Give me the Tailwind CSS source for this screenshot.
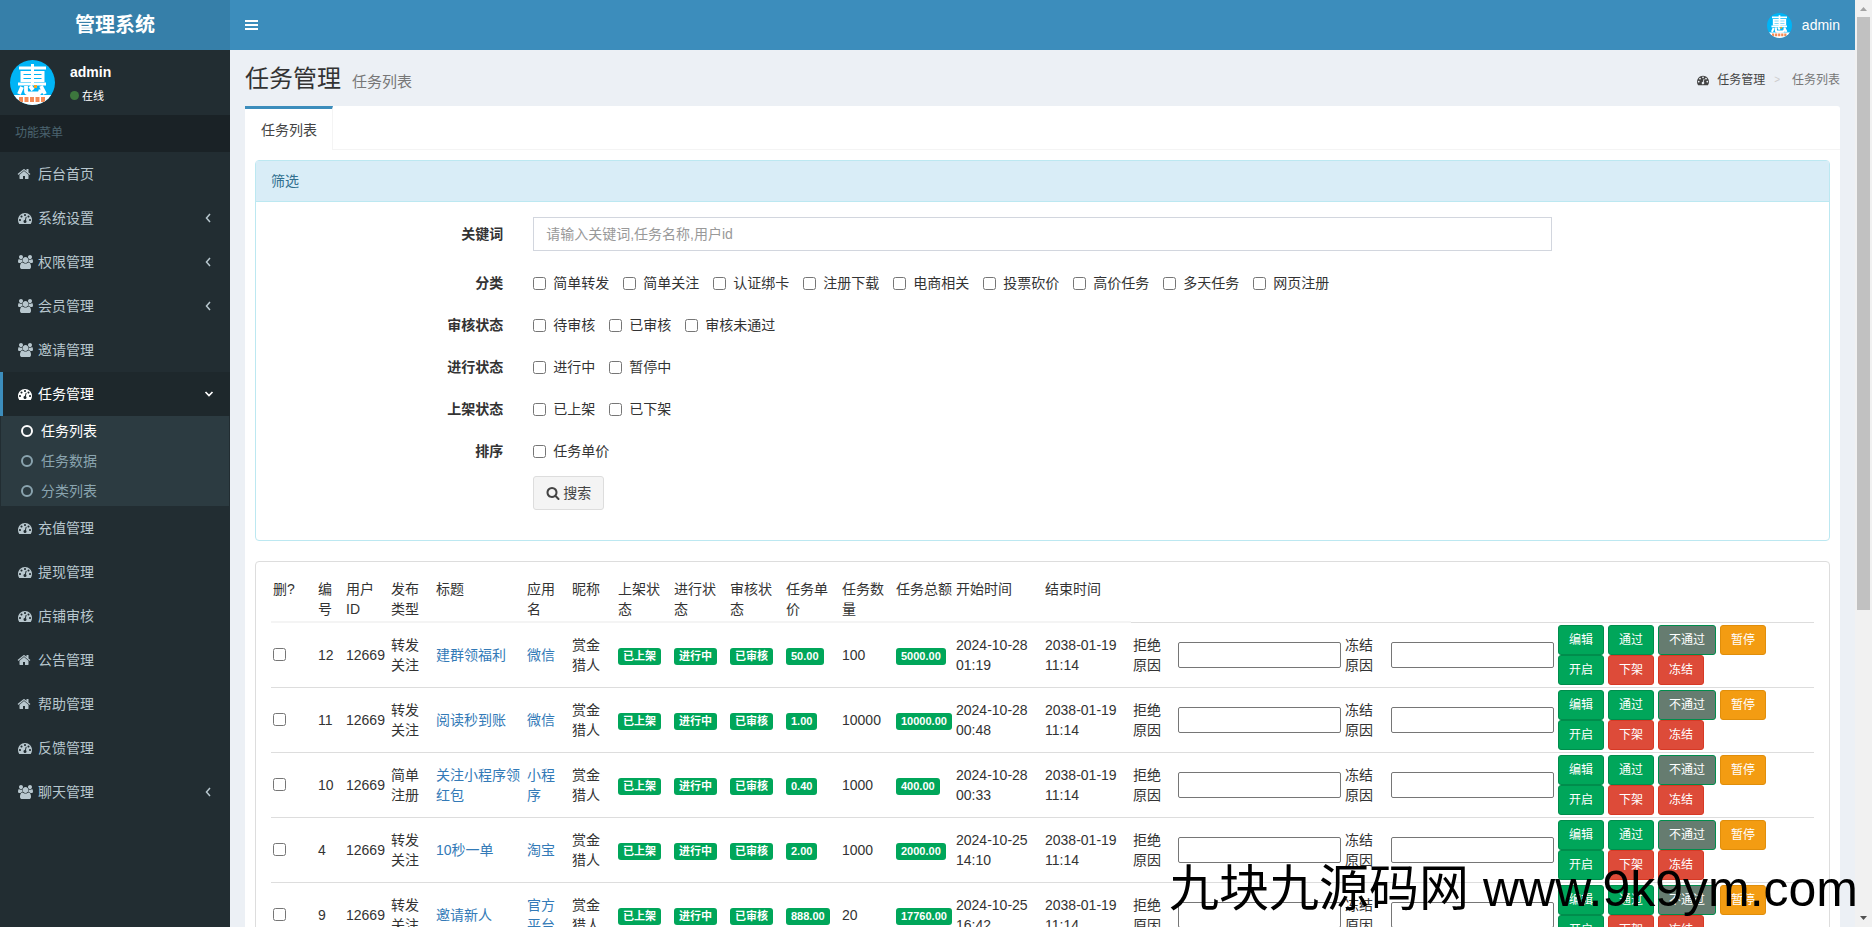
<!DOCTYPE html>
<html lang="zh-CN">
<head>
<meta charset="utf-8">
<title>管理系统 - 任务列表</title>
<script src="https://cdn.jsdelivr.net/npm/@tailwindcss/browser@4"></script>
</head>
<body class="relative flex h-screen overflow-hidden bg-[#ecf0f5] text-sm leading-5 text-[#333] font-['Liberation_Sans','Noto_Sans_CJK_SC',sans-serif]">
<svg class="hidden" aria-hidden="true">
  <symbol id="home" viewBox="0 0 1792 1792"><path d="M1472 992v480q0 26-19 45t-45 19h-384v-384h-256v384h-384q-26 0-45-19t-19-45v-480q0-1 .5-3t.5-3l575-474 575 474q1 2 1 6zm223-69l-62 74q-8 9-21 11h-3q-13 0-21-7l-692-577-692 577q-12 8-24 7-13-2-21-11l-62-74q-8-10-7-23.500t11-21.500l719-599q32-26 76-26t76 26l244 204v-195q0-14 9-23t23-9h192q14 0 23 9t9 23v408l219 182q10 8 11 21.500t-7 23.500z"/></symbol>
  <symbol id="dash" viewBox="0 0 1792 1792"><path d="M384 1152q0-53-37.500-90.500t-90.500-37.500-90.500 37.500-37.500 90.500 37.500 90.500 90.500 37.500 90.500-37.500 37.500-90.500zm192-448q0-53-37.500-90.500t-90.500-37.500-90.500 37.500-37.500 90.500 37.500 90.500 90.500 37.500 90.500-37.500 37.500-90.500zm428 481l101-382q6-26-7.500-48.500t-38.500-29.500-48 6.500-30 39.500l-101 382q-60 5-107 43.500t-63 98.500q-20 77 20 146t117 89 146-20 89-117q16-60-6-117t-72-91zm660-33q0-53-37.500-90.500t-90.500-37.500-90.500 37.500-37.500 90.500 37.500 90.500 90.500 37.500 90.500-37.500 37.500-90.500zm-640-640q0-53-37.500-90.500t-90.500-37.500-90.500 37.500-37.500 90.500 37.500 90.500 90.500 37.500 90.500-37.500 37.500-90.500zm448 192q0-53-37.500-90.500t-90.500-37.500-90.500 37.500-37.500 90.500 37.500 90.500 90.500 37.500 90.500-37.500 37.500-90.500zm320 448q0 261-141 483-19 29-54 29h-1402q-35 0-54-29-141-221-141-483 0-182 71-348t191-286 286-191 348-71 348 71 286 191 191 286 71 348z"/></symbol>
  <symbol id="users" viewBox="0 0 1920 1792"><path d="M593 896q-162 5-265 128h-134q-82 0-138-40.500t-56-118.500q0-353 124-353 6 0 43.500 21t97.500 42.500 119 21.500q67 0 133-23-5 37-5 66 0 139 81 256zm1071 637q0 120-73 189.500t-194 69.500h-874q-121 0-194-69.500t-73-189.500q0-53 3.500-103.500t14-109 26.500-108.500 43-97.500 62-81 85.500-53.500 111.500-20q10 0 43 21.500t73 48 107 48 135 21.500 135-21.500 107-48 73-48 43-21.500q61 0 111.500 20t85.500 53.500 62 81 43 97.500 26.500 108.500 14 109 3.500 103.500zm-1024-1277q0 106-75 181t-181 75-181-75-75-181 75-181 181-75 181 75 75 181zm704 384q0 159-112.500 271.500t-271.500 112.500-271.500-112.500-112.500-271.500 112.500-271.500 271.500-112.500 271.500 112.500 112.500 271.500zm576 225q0 78-56 118.500t-138 40.500h-134q-103-123-265-128 81-117 81-256 0-29-5-66 66 23 133 23 59 0 119-21.500t97.500-42.500 43.500-21q124 0 124 353zm-128-609q0 106-75 181t-181 75-181-75-75-181 75-181 181-75 181 75 75 181z"/></symbol>
  <symbol id="search" viewBox="0 0 1792 1792"><path d="M1216 832q0-185-131.500-316.500t-316.500-131.500-316.500 131.500-131.500 316.500 131.500 316.500 316.500 131.500 316.500-131.500 131.500-316.500zm512 832q0 52-38 90t-90 38q-54 0-90-38l-343-342q-179 124-399 124-143 0-273.500-55.500t-225-150-150-225-55.500-273.500 55.500-273.500 150-225 225-150 273.500-55.500 273.500 55.500 225 150 150 225 55.500 273.500q0 220-124 399l343 343q37 37 37 90z"/></symbol>
  <symbol id="ring" viewBox="0 0 14 14"><circle cx="7" cy="7" r="5" fill="none" stroke="currentColor" stroke-width="2"/></symbol>
  <symbol id="left" viewBox="0 0 8 14"><path d="M6 3 2.500 7 6 11" fill="none" stroke="currentColor" stroke-width="1.500"/></symbol>
  <symbol id="down" viewBox="0 0 10 14"><path d="M1.500 5 5 8.500 8.500 5" fill="none" stroke="currentColor" stroke-width="1.700"/></symbol>
  <symbol id="avatar" viewBox="0 0 45 45">
    <rect width="45" height="45" fill="#00b4f6"/>
    <rect y="35" width="45" height="10" fill="#fff"/>
    <g fill="none" stroke="#fff" stroke-width="3">
      <path d="M9 8h27M22.500 4v19M12 12.500h21v8H12zM12 16.500h21M8 24h28"/>
      <path d="M12 27l-3 7M16 26v5q0 2.500 3 2.500h9q2.500 0 2.500-4M20 26l3 4M31 26l4 8" stroke-width="3.800"/>
    </g>
    <rect x="24" y="25" width="3" height="3" fill="#f5a623"/>
    <path d="M9 37h4v5H9zM14.500 37h4v5h-4zM20 37h4v5h-4zM25.500 37h4v5h-4zM31 37h4v5h-4z" fill="#f58a55"/>
  </symbol>
</svg>

<aside class="flex w-[230px] shrink-0 flex-col bg-[#222d32]">
  <a href="#" class="flex h-[50px] shrink-0 items-center justify-center bg-[#367fa9] text-xl font-bold text-white">管理系统</a>
  <div class="flex h-[65px] shrink-0 items-center gap-[15px] px-[10px] text-white">
    <svg class="size-[45px] rounded-full"><use href="#avatar"/></svg>
    <div class="flex flex-col gap-1 pt-0.5">
      <p class="font-bold">admin</p>
      <a href="#" class="flex items-center gap-[3px] text-[11px]"><span class="size-[9px] rounded-full bg-[#3c763d]"></span>在线</a>
    </div>
  </div>
  <div class="flex h-[37px] shrink-0 items-center bg-[#1a2226] px-[15px] pb-0.5 text-xs text-[#4b646f]">功能菜单</div>
  <nav id="menu" class="flex flex-col text-[#b8c7ce]"></nav>
</aside>

<div class="flex min-w-0 flex-1 flex-col">
  <header class="flex h-[50px] shrink-0 items-center justify-between bg-[#3c8dbc] px-[15px] text-white">
    <button type="button" aria-label="切换菜单"><svg class="h-[14px] w-[13px]" viewBox="0 0 13 14" fill="currentColor"><path d="M0 2h13v2H0zM0 6h13v2H0zM0 10h13v2H0z"/></svg></button>
    <a href="#" class="flex items-center gap-[10px]"><svg class="size-[25px] rounded-full"><use href="#avatar"/></svg>admin</a>
  </header>
  <main class="flex flex-col overflow-hidden px-[15px]">
    <div class="flex h-[56px] shrink-0 items-center justify-between pt-0.5">
      <h1 class="flex items-baseline gap-[11px] text-2xl">任务管理<small class="text-[15px] text-[#777]">任务列表</small></h1>
      <nav class="flex items-center pt-0.5 text-xs text-[#777]" aria-label="位置">
        <a href="#" class="flex items-center gap-2 text-[#444]"><svg class="size-3 fill-current"><use href="#dash"/></svg>任务管理</a>
        <span class="pr-3 pl-[9px] text-[10px] text-[#ccc]">&gt;</span>
        <span>任务列表</span>
      </nav>
    </div>
    <div class="rounded-[3px] bg-white">
      <div class="flex h-[44px] border-b border-[#f4f4f4]">
        <a href="#" class="-mb-px flex items-center border-t-3 border-r border-t-[#3c8dbc] border-r-[#f4f4f4] bg-white pr-[15px] pl-4 text-[#444]">任务列表</a>
      </div>
      <div class="flex flex-col gap-5 p-[10px]">
        <section class="rounded border border-[#bce8f1] bg-white">
          <h2 class="border-b border-[#bce8f1] bg-[#d9edf7] px-[15px] py-[10px] text-[#31708f]">筛选</h2>
          <form id="filters" class="flex flex-col gap-[15px] pt-[15px] pb-[30px]">
            <div class="grid grid-cols-12">
              <label for="kw" class="col-span-2 px-[15px] pt-[7px] text-right font-bold">关键词</label>
              <div class="col-span-8 px-[15px]"><input id="kw" type="text" placeholder="请输入关键词,任务名称,用户id" class="block h-[34px] w-full border border-[#d2d6de] px-3 placeholder:text-[#999]"></div>
            </div>
          </form>
        </section>
        <section class="rounded border border-[#ddd] bg-white p-[15px]">
          <table class="w-full table-fixed border-separate border-spacing-0 text-left">
            <colgroup>
              <col class="w-[45px]"><col class="w-[28px]"><col class="w-[45px]"><col class="w-[45px]"><col class="w-[91px]"><col class="w-[45px]"><col class="w-[46px]"><col class="w-[56px]"><col class="w-[56px]"><col class="w-[56px]"><col class="w-[56px]"><col class="w-[54px]"><col class="w-[60px]"><col class="w-[89px]"><col class="w-[88px]"><col class="w-[45px]"><col class="w-[167px]"><col class="w-[46px]"><col class="w-[167px]"><col>
            </colgroup>
            <thead><tr id="head"></tr></thead>
            <tbody id="rows"></tbody>
          </table>
        </section>
      </div>
    </div>
  </main>
</div>

<div class="flex w-[17px] shrink-0 flex-col items-center bg-[#f1f1f1]" aria-hidden="true">
  <svg class="size-[17px] shrink-0" viewBox="0 0 17 17"><path d="M5 11h7L8.500 7z" fill="#a3a3a3"/></svg>
  <div class="h-[64%] w-[13px] bg-[#c1c1c1]"></div>
  <svg class="mt-auto size-[17px] shrink-0" viewBox="0 0 17 17"><path d="M5 6h7L8.500 10z" fill="#505050"/></svg>
</div>

<p class="pointer-events-none absolute right-[14px] bottom-2 text-[50px] leading-[60px] whitespace-nowrap text-black">九块九源码网 www.9k9ym.com</p>

<script>
  const icon = (id, cls) => `<svg class="${cls}"><use href="#${id}"/></svg>`;

  const menu = [
    ['home', '后台首页'], ['dash', '系统设置', 1], ['users', '权限管理', 1], ['users', '会员管理', 1], ['users', '邀请管理'],
    ['dash', '任务管理', 2], ['dash', '充值管理'], ['dash', '提现管理'], ['dash', '店铺审核'], ['home', '公告管理'],
    ['home', '帮助管理'], ['dash', '反馈管理'], ['users', '聊天管理', 1]
  ];
  document.getElementById('menu').innerHTML = menu.map(([ic, name, kind]) => {
    const state = kind === 2 ? 'border-[#3c8dbc] bg-[#1e282c] text-white' : 'border-transparent';
    const size = ic === 'users' ? 'h-[14px] w-[15px] fill-current' : ic === 'home' ? 'size-[14px] -ml-px fill-current' : 'size-[14px] fill-current';
    const arrow = kind === 1 ? icon('left', 'ml-auto mr-[3px] h-[14px] w-2') : kind === 2 ? icon('down', 'ml-auto mr-px h-[14px] w-[10px]') : '';
    const sub = kind === 2 ? `<div class="mx-px flex flex-col bg-[#2c3b41] text-[#8aa4af]">${['任务列表', '任务数据', '分类列表'].map((t, i) =>
      `<a href="#" class="flex h-[30px] items-center gap-[7px] pl-[19px] ${i ? '' : 'text-white'}">${icon('ring', 'size-[14px]')}${t}</a>`).join('')}</div>` : '';
    return `<a href="#" class="flex h-[44px] items-center border-l-3 px-[15px] ${state}"><span class="w-5">${icon(ic, size)}</span>${name}${arrow}</a>${sub}`;
  }).join('');

  const groups = [
    ['分类', ['简单转发', '简单关注', '认证绑卡', '注册下载', '电商相关', '投票砍价', '高价任务', '多天任务', '网页注册']],
    ['审核状态', ['待审核', '已审核', '审核未通过']],
    ['进行状态', ['进行中', '暂停中']],
    ['上架状态', ['已上架', '已下架']],
    ['排序', ['任务单价']]
  ];
  document.getElementById('filters').insertAdjacentHTML('beforeend', groups.map(([g, opts]) =>
    `<div class="grid grid-cols-12 pt-[7px]" role="group" aria-label="${g}"><span class="col-span-2 px-[15px] text-right font-bold">${g}</span>
     <div class="col-span-8 flex flex-wrap gap-x-[14px] px-[15px]">${opts.map(o => `<label class="flex items-center gap-[7px]"><input type="checkbox" class="size-[13px]">${o}</label>`).join('')}</div></div>`).join('') +
    `<div class="grid grid-cols-12"><div class="col-span-8 col-start-3 px-[15px]"><button type="submit" class="flex h-[34px] items-center gap-[3px] rounded-[3px] border border-[#ddd] bg-[#f4f4f4] px-3 text-[#444]">${icon('search', 'size-[14px] fill-current')}搜索</button></div></div>`);

  const heads = ['删?', '编号', '用户ID', '发布类型', '标题', '应用名', '昵称', '上架状态', '进行状态', '审核状态', '任务单价', '任务数量', '任务总额', '开始时间', '结束时间'];
  document.getElementById('head').innerHTML = heads.map(h => `<th class="border-b-2 border-[#f4f4f4] p-0.5 align-top font-normal">${h}</th>`).join('') +
    '<td class="border-b border-[#ddd]"></td>'.repeat(5);

  const data = [
    [12, '转发关注', '建群领福利', '微信', '50.00', 100, '5000.00', '2024-10-28 01:19'],
    [11, '转发关注', '阅读秒到账', '微信', '1.00', 10000, '10000.00', '2024-10-28 00:48'],
    [10, '简单注册', '关注小程序领红包', '小程序', '0.40', 1000, '400.00', '2024-10-28 00:33'],
    [4, '转发关注', '10秒一单', '淘宝', '2.00', 1000, '2000.00', '2024-10-25 14:10'],
    [9, '转发关注', '邀请新人', '官方平台', '888.00', 20, '17760.00', '2024-10-25 16:42']
  ];
  const buttons = [
    ['编辑', 'border-[#008d4c] bg-[#00a65a]'], ['通过', 'border-[#008d4c] bg-[#00a65a]'], ['不通过', 'border-[#008d4c] bg-[#667c70]'], ['暂停', 'border-[#e08e0b] bg-[#f39c12]'],
    ['开启', 'border-[#008d4c] bg-[#00a65a]'], ['下架', 'border-[#d73925] bg-[#dd4b39]'], ['冻结', 'border-[#d73925] bg-[#dd4b39]']
  ];
  const badge = t => `<span class="mt-[3px] block w-fit rounded-[3px] bg-[#00a65a] px-[5px] text-[11px] leading-[17px] font-bold whitespace-nowrap text-white">${t}</span>`;
  const link = t => `<a href="#" class="text-[#337ab7]">${t}</a>`;
  const field = (id, t) => `<input type="text" id="${id}" aria-label="${t}" class="block h-[26px] w-full rounded-[2px] border border-[#767676] bg-white px-0.5">`;
  document.getElementById('rows').innerHTML = data.map((r, n) => {
    const cells = [
      `<input type="checkbox" aria-label="删除 ${r[0]}" class="mb-0.5 block size-[13px]">`, r[0], '12669', r[1], link(r[2]), link(r[3]), '赏金<br>猎人',
      badge('已上架'), badge('进行中'), badge('已审核'), badge(r[4]), r[5], badge(r[6]), r[7], '2038-01-19 11:14',
      `<label for="deny${n}">拒绝<br>原因</label>`, field('deny' + n, '拒绝原因'), `<label for="ice${n}">冻结<br>原因</label>`, field('ice' + n, '冻结原因'),
      `<div class="flex flex-wrap gap-x-1">${buttons.map(([t, c]) => `<button type="button" class="rounded-[3px] border px-[10px] py-[5px] text-xs leading-[18px] text-white ${c}">${t}</button>`).join('')}</div>`
    ];
    const line = n ? 'border-t border-[#ddd] p-0.5 align-middle' : 'p-0.5 align-middle';
    return `<tr>${cells.map(c => `<td class="${line}">${c}</td>`).join('')}</tr>`;
  }).join('');
</script>
</body>
</html>
